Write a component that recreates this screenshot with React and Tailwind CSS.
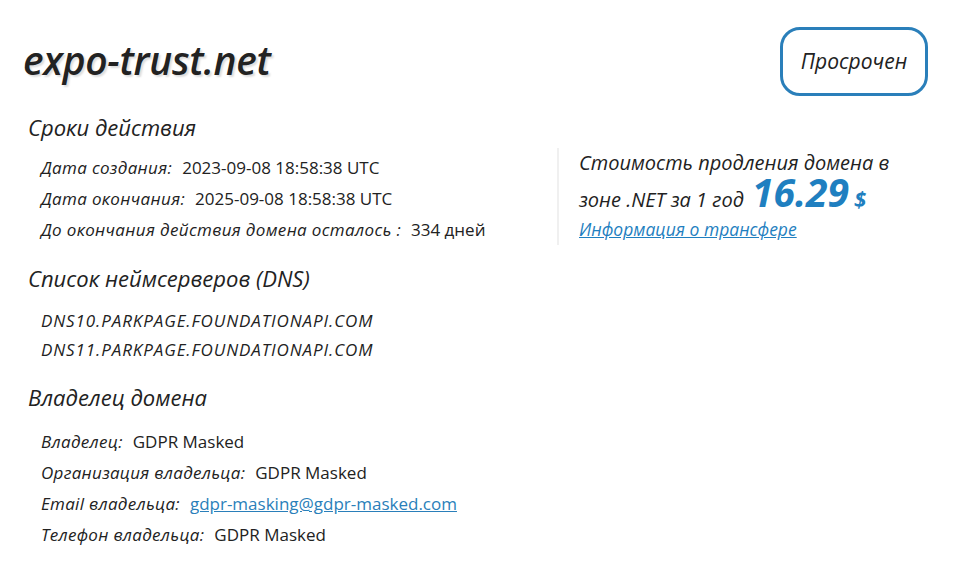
export default function App() {
  const dates = [
    ["Дата создания:", "2023-09-08 18:58:38 UTC"],
    ["Дата окончания:", "2025-09-08 18:58:38 UTC"],
    ["До окончания действия домена осталось :", "334 дней"],
  ];
  const owner = [
    ["Владелец:", "GDPR Masked"],
    ["Организация владельца:", "GDPR Masked"],
    ["Email владельца:", "gdpr-masking@gdpr-masked.com", true],
    ["Телефон владельца:", "GDPR Masked"],
  ];

  return (
    <div className="min-h-screen bg-white text-[#222] font-['Open_Sans',sans-serif] pl-[23px] pr-[32px] pt-[27px]">
      <div className="flex items-start justify-between">
        <h1 className="mt-[11px] text-[39px] leading-[44px] font-semibold italic tracking-[-0.3px] text-[#222] [text-shadow:2px_2px_2px_#ddd]">
          expo-trust.net
        </h1>
        <div className="w-[148px] h-[69px] flex items-center justify-center rounded-[20px] border-[3px] border-[#2a7fba] text-[21px] italic">
          Просрочен
        </div>
      </div>

      <div className="flex mt-[16px]">
        <div className="w-[534px] pl-[5px]">
          <h2 className="text-[22px] leading-[30px] italic">Сроки действия</h2>
          <div className="mt-[14px] pl-[13px] flex flex-col gap-[7px]">
            {dates.map(([k, v]) => (
              <div key={k} className="flex gap-[10px] text-[17px] leading-[24px]">
                <span className="italic tracking-[0.35px]">{k}</span>
                <span>{v}</span>
              </div>
            ))}
          </div>
        </div>
        <div className="mt-[36px] h-[97px] border-l-2 border-[#f0f0f0] pl-[20px] text-[20px] italic">
          <div className="leading-[30px]">Стоимость продления домена в</div>
          <div className="h-[34px] pt-[4px] leading-[34px] whitespace-nowrap">
            <span>зоне .NET за 1 год</span>
            <span className="ml-[8px] text-[39px] leading-[20px] font-bold text-[#1f7fc0]">16.29</span>
            <span className="ml-[5px] text-[22px] leading-[20px] font-bold text-[#1f7fc0]">$</span>
          </div>
          <a href="#" className="block mt-[3px] text-[17.5px] leading-[28px] text-[#1f7fc0] underline">
            Информация о трансфере
          </a>
        </div>
      </div>

      <div className="pl-[5px]">
        <h2 className="mt-[18px] text-[22px] leading-[30px] italic">Список неймсерверов (DNS)</h2>
        <div className="mt-[16px] pl-[13px] flex flex-col gap-[5px] text-[17px] leading-[24px] italic tracking-[0.9px]">
          <div>DNS10.PARKPAGE.FOUNDATIONAPI.COM</div>
          <div>DNS11.PARKPAGE.FOUNDATIONAPI.COM</div>
        </div>

        <h2 className="mt-[20px] text-[22px] leading-[30px] italic">Владелец домена</h2>
        <div className="mt-[18px] pl-[13px] flex flex-col gap-[7px]">
          {owner.map(([k, v, link]) => (
            <div key={k} className="flex gap-[10px] text-[17px] leading-[24px]">
              <span className="italic tracking-[0.3px]">{k}</span>
              {link ? (
                <a href="#" className="text-[#2a7fba] underline">{v}</a>
              ) : (
                <span>{v}</span>
              )}
            </div>
          ))}
        </div>
      </div>
    </div>
  );
}
